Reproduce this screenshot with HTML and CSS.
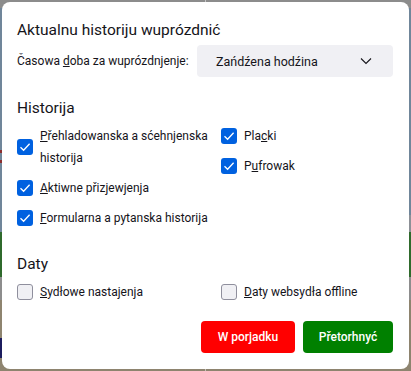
FILE: index.html
```html
<!DOCTYPE html>
<html lang="hsb">
<head>
  <meta charset="UTF-8" />
  <meta name="viewport" content="width=device-width, initial-scale=1.0"/>
  <title>Aktualnu historiju wuprózdnić</title>
  <link rel="stylesheet" href="styles.css">
</head>
<body>

<div class="dialog">
  <h1>Aktualnu historiju wuprózdnić</h1>

  <div class="range">
    <label class="range-label">Časowa <u>d</u>oba za wuprózdnjenje:</label>
    <div class="select">
      <span>Zańdźena hodźina</span>
      <svg class="chevron" width="12" height="8" viewBox="0 0 12 8">
        <path d="M1 1.5 L6 6.5 L11 1.5" fill="none" stroke="#15141a" stroke-width="1.1"/>
      </svg>
    </div>
  </div>

  <h2>Historija</h2>
  <div class="grid">
    <div class="col">
      <label class="item"><span class="box on"></span><span><u>P</u>řehladowanska a sćehnjenska historija</span></label>
      <label class="item"><span class="box on"></span><span><u>A</u>ktiwne přizjewjenja</span></label>
      <label class="item"><span class="box on"></span><span><u>F</u>ormularna a pytanska historija</span></label>
    </div>
    <div class="col">
      <label class="item"><span class="box on"></span><span>Pla<u>c</u>ki</span></label>
      <label class="item"><span class="box on"></span><span>P<u>u</u>frowak</span></label>
    </div>
  </div>

  <h2>Daty</h2>
  <div class="grid">
    <div class="col">
      <label class="item"><span class="box"></span><span><u>S</u>ydłowe nastajenja</span></label>
    </div>
    <div class="col">
      <label class="item"><span class="box"></span><span><u>D</u>aty websydła offline</span></label>
    </div>
  </div>

  <div class="buttons">
    <button class="btn ok">W porjadku</button>
    <button class="btn cancel">Přetorhnyć</button>
  </div>
</div>

</body>
</html>
```

FILE: styles.css
```css
html, body {
  margin: 0;
  padding: 0;
  height: 100%;
}
body {
  font-family: Roboto, 'Noto Sans', sans-serif;
  font-size: 12px;
  color: #15141a;
  padding: 2px;
  box-sizing: border-box;
  background:
    linear-gradient(to bottom, #8c8c8c 0 8px, #70869a 8px 150px, #8b2f2f 150px 153px, #70869a 153px 160px, #8b2f2f 160px 163px, #70869a 163px 232px, #2f6a2c 232px 277px, #8d8d8d 277px 300px, #8e846f 300px 338px, #1c1c5e 338px 358px, #8e846f 358px) left / 50% 100% no-repeat,
    linear-gradient(to bottom, #8c8c8c 0 8px, #70869a 8px 215px, #8c9096 215px 232px, #2f6a2c 232px 277px, #8d8d8d 277px 300px, #8e846f 300px) right / 50% 100% no-repeat;
}
.dialog {
  background: #fff;
  border-radius: 8px;
  height: 100%;
  box-sizing: border-box;
  padding: 18px 16px 14px 15px;
}
h1 {
  margin: 0 0 5px;
  font-size: 15.5px;
  font-weight: 400;
  line-height: 20px;
}
h2 {
  margin: 21px 0 3px;
  font-size: 15.5px;
  font-weight: 400;
  line-height: 20px;
}
.range {
  display: flex;
  align-items: center;
  justify-content: space-between;
  height: 32px;
  white-space: nowrap;
}
.select {
  flex: none;
  width: 196px;
  height: 32px;
  box-sizing: border-box;
  background: #f0f0f4;
  border-radius: 4px;
  display: flex;
  align-items: center;
  justify-content: space-between;
  padding: 0 21px 0 19px;
  font-size: 12.5px;
}
.grid {
  display: grid;
  grid-template-columns: 204px 1fr;
}
.col {
  display: flex;
  flex-direction: column;
}
.item {
  display: flex;
  align-items: center;
  gap: 7px;
  padding: 4px 0;
  line-height: 22px;
}
.box {
  flex: none;
  width: 16px;
  height: 16px;
  box-sizing: border-box;
  border-radius: 3px;
  border: 1px solid #8f8f9d;
  background: #f0f0f4;
}
.box.on {
  border: none;
  background: #0061e0 url("data:image/svg+xml;utf8,<svg xmlns='http://www.w3.org/2000/svg' width='16' height='16'><path d='M3.5 8.2 L6.6 11.2 L12.6 4.8' fill='none' stroke='white' stroke-width='1.3'/></svg>") no-repeat center;
}
.buttons {
  display: flex;
  justify-content: flex-end;
  gap: 8px;
  margin-top: 14px;
}
.btn {
  height: 32px;
  border: none;
  border-radius: 4px;
  color: #fff;
  font-family: inherit;
  font-size: 12px;
  font-weight: 500;
  padding: 0;
  white-space: nowrap;
}
.ok {
  background: #ff0000;
  width: 94px;
}
.cancel {
  background: #008000;
  width: 90px;
}
```
